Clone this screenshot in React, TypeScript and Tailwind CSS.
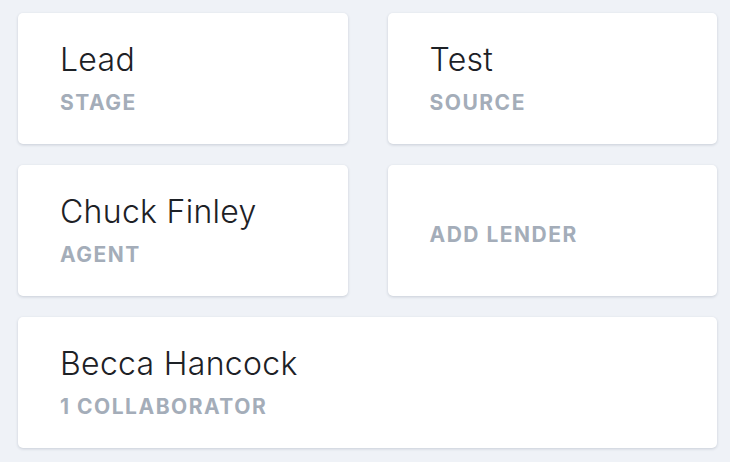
import React from 'react'

type Tile = { title?: string; label: string; wide?: boolean }

const TILES: Tile[] = [
  { title: 'Lead', label: 'STAGE' },
  { title: 'Test', label: 'SOURCE' },
  { title: 'Chuck Finley', label: 'AGENT' },
  { label: 'ADD LENDER' },
  { title: 'Becca Hancock', label: '1 COLLABORATOR', wide: true },
]

function Card({ title, label, wide }: Tile) {
  return (
    <div
      className={`flex h-[131px] flex-col justify-center rounded-[5px] bg-white pl-[42px] shadow-[0_1px_3px_rgba(30,45,70,0.18)] ${
        wide ? 'col-span-2' : ''
      }`}
    >
      {title && (
        <div className="text-[32px] leading-[36px] font-light tracking-[0.3px] text-[#1d2126]">{title}</div>
      )}
      <div
        className={`text-[21px] leading-[26px] font-bold tracking-[1.5px] text-[#a4adb9] ${
          title ? 'mt-[12px]' : 'mt-[8px]'
        }`}
      >
        {label}
      </div>
    </div>
  )
}

export default function App() {
  return (
    <div className="h-[462px] w-[730px] bg-[#eff2f7] pt-[13px] pl-[18px] pr-[13px] font-['Inter',sans-serif]">
      <div className="grid grid-cols-2 gap-x-[40px] gap-y-[21px]">
        {TILES.map((t) => (
          <Card key={t.label} {...t} />
        ))}
      </div>
    </div>
  )
}
